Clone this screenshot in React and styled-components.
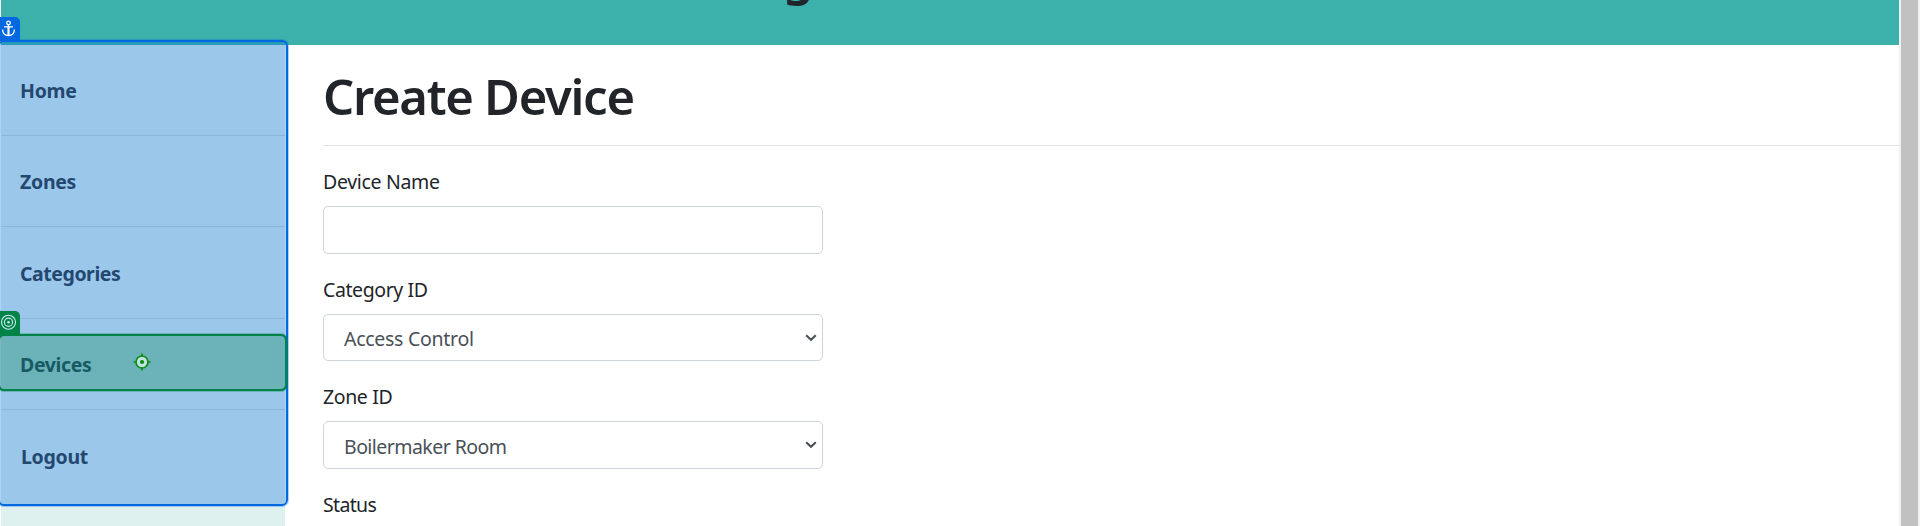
import React from 'react';
import styled, { createGlobalStyle } from 'styled-components';

const GlobalStyle = createGlobalStyle`
  *, *::before, *::after { box-sizing: border-box; }
  html, body { margin: 0; overflow: hidden; }
  body {
    background: #fff;
    color: #212529;
    font-family: 'Segoe UI', 'Noto Sans', sans-serif;
    font-size: 19.5px;
    line-height: 30px;
  }
`;

const Window = styled.div`
  position: relative;
  display: flex;
  width: 1920px;
  height: 526px;
  overflow: hidden;
`;

const Page = styled.div`
  flex: 1;
  display: flex;
  flex-direction: column;
  padding-left: 1px;
`;

const Header = styled.header`
  height: 45px;
  flex: none;
  overflow: hidden;
  background: #3cb0aa;
  padding-left: 782px;
`;

const Brand = styled.h1`
  margin: -55px 0 0;
  font-size: 49px;
  font-weight: 600;
  line-height: 60px;
`;

const Body = styled.div`
  flex: 1;
  display: flex;
`;

const Sidebar = styled.nav`
  width: 284px;
  flex: none;
  background: #def1ef;
`;

const NavItem = styled.a`
  display: flex;
  align-items: center;
  height: ${(p) => p.$height}px;
  padding: 2px 0 0 ${(p) => p.$indent || 19}px;
  border-bottom: ${(p) => (p.$last ? '0' : '1px solid #c8d9d7')};
  color: #343a40;
  font-weight: 700;
  letter-spacing: ${(p) => p.$spacing || 0}px;
`;

const Main = styled.main`
  flex: 1;
  padding: 21px 0 0 38px;
`;

const Title = styled.h1`
  margin: 0;
  height: 79px;
  font-size: 49px;
  font-weight: 600;
  line-height: 60px;
  letter-spacing: -1.3px;
`;

const Rule = styled.hr`
  height: 1px;
  margin: 0 0 20px;
  border: 0;
  background: #e1e2e3;
`;

const Field = styled.div`
  width: 500px;
  margin-bottom: 20px;
`;

const Label = styled.label`
  display: block;
  height: 30px;
  padding-top: 1px;
  margin-bottom: 10px;
  letter-spacing: ${(p) => p.$spacing || 0}px;
`;

const Control = styled.div`
  display: flex;
  align-items: center;
  justify-content: space-between;
  width: 500px;
  height: ${(p) => p.$height}px;
  padding: 0 5px 0 20px;
  border: 1px solid #ced4da;
  border-radius: 5px;
  color: #495057;
  letter-spacing: ${(p) => p.$spacing || 0}px;
`;

const Value = styled.span`
  padding-top: 3px;
`;

const Scrollbar = styled.div`
  width: 21px;
  flex: none;
  padding: 0 2px;
  background: #f1f1f1;
`;

const Thumb = styled.div`
  height: 100%;
  background: #c1c1c1;
`;

const Highlight = styled.div`
  position: absolute;
  left: -2px;
  top: ${(p) => p.$top}px;
  width: ${(p) => p.$width}px;
  height: ${(p) => p.$height}px;
  border: 2px solid ${(p) => p.$color};
  border-radius: 6px;
  background: ${(p) => p.$fill};
  background-clip: padding-box;
  box-shadow: 0 0 0 1px ${(p) => p.$fill};
`;

const Badge = styled.div`
  position: absolute;
  left: 0;
  top: ${(p) => p.$top}px;
  width: 20px;
  height: 24px;
  border-radius: 0 5px 0 0;
  background: ${(p) => p.$color};
`;

const Marker = styled.svg`
  position: absolute;
  left: 133px;
  top: 353px;
`;

const Chevron = () => (
  <svg width="12" height="8" viewBox="0 0 12 8" fill="none">
    <path d="M1.2 1.2 6 5.8 10.8 1.2" stroke="#495057" strokeWidth="2.1" />
  </svg>
);

const Anchor = () => (
  <svg width="20" height="24" viewBox="0 0 20 24" fill="none" stroke="#fff" strokeWidth="1.3">
    <circle cx="8.5" cy="6" r="1.8" />
    <path d="M8.5 8v11M4 9.8h9" />
    <path d="M2.6 12.6c0 3.8 2.5 6 5.9 6s5.9-2.2 5.9-6" />
    <path d="M8.5 9v10" strokeWidth="2" />
  </svg>
);

const Target = () => (
  <svg width="20" height="24" viewBox="0 0 20 24" fill="none" stroke="#c4e8ec" strokeWidth="1.15">
    <circle cx="8.5" cy="11.2" r="7" />
    <circle cx="8.5" cy="11.2" r="4.1" />
    <circle cx="8.5" cy="11.2" r="1.3" fill="#c4e8ec" stroke="none" />
  </svg>
);

export default function App() {
  return (
    <>
      <GlobalStyle />
      <Window>
        <Page>
          <Header>
            <Brand>g</Brand>
          </Header>
          <Body>
            <Sidebar>
              <NavItem $height={91} $spacing={-0.25}>Home</NavItem>
              <NavItem $height={91} $spacing={-0.3}>Zones</NavItem>
              <NavItem $height={92} $spacing={-0.45}>Categories</NavItem>
              <NavItem $height={91} $spacing={-0.35}>Devices</NavItem>
              <NavItem $height={92} $spacing={-0.3} $indent={20} $last>Logout</NavItem>
            </Sidebar>
            <Main>
              <Title>Create Device</Title>
              <Rule />
              <Field>
                <Label $spacing={-0.33}>Device Name</Label>
                <Control $height={48} />
              </Field>
              <Field>
                <Label $spacing={-0.4}>Category ID</Label>
                <Control $height={47} $spacing={-0.28}><Value>Access Control</Value><Chevron /></Control>
              </Field>
              <Field>
                <Label $spacing={-0.38}>Zone ID</Label>
                <Control $height={48} $spacing={-0.55}><Value>Boilermaker Room</Value><Chevron /></Control>
              </Field>
              <Label $spacing={-0.65}>Status</Label>
            </Main>
          </Body>
        </Page>
        <Scrollbar><Thumb /></Scrollbar>
        <Highlight $top={334} $width={289} $height={57} $color="#008347" $fill="transparent" />
        <Highlight $top={40} $width={290} $height={466} $color="#0068e0" $fill="rgba(0,104,224,0.3)" />
        <Highlight $top={334} $width={289} $height={57} $color="#008347" $fill="rgba(0,131,71,0.3)" />
        <Badge $top={17} $color="#0068e0"><Anchor /></Badge>
        <Badge $top={311} $color="#008347"><Target /></Badge>
        <Marker width="18" height="18" viewBox="0 0 18 18">
          <circle cx="9" cy="9" r="6" fill="#c4e2e6" stroke="#0b8f12" strokeWidth="1.7" />
          <circle cx="9" cy="9" r="2.1" fill="#0b8f12" />
          <path d="M9 .5v3M9 14.5v3M.5 9h3M14.5 9h3" stroke="#0b8f12" strokeWidth="1.7" />
        </Marker>
      </Window>
    </>
  );
}
